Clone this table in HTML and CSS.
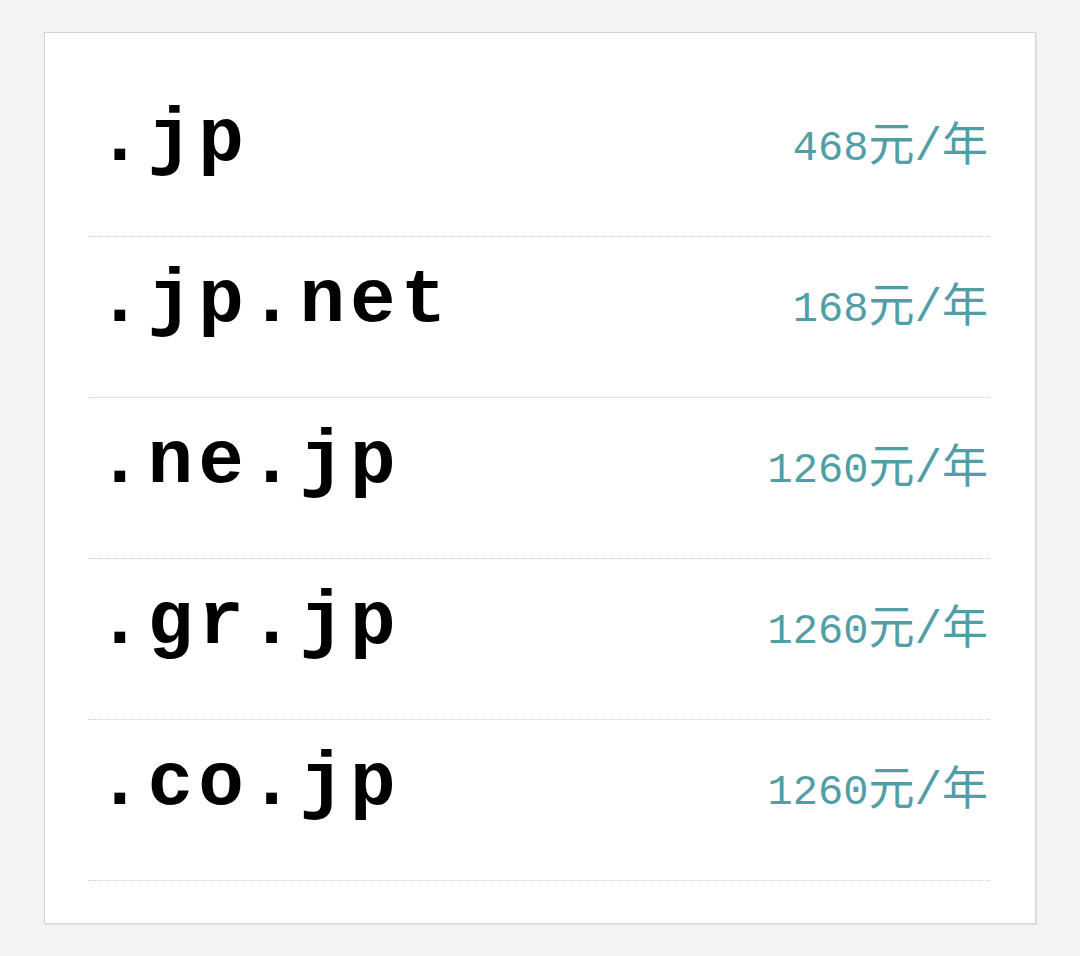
FILE: index.html
```html
<!DOCTYPE html>
<html lang="zh">
<head>
  <meta charset="UTF-8">
  <title>域名价格</title>
  <link rel="stylesheet" href="styles.css">
</head>
<body>

<div class="card">
  <div class="row">
    <span class="domain">.jp</span>
    <span class="price">468<span class="unit">元/年</span></span>
  </div>
  <div class="row">
    <span class="domain">.jp.net</span>
    <span class="price">168<span class="unit">元/年</span></span>
  </div>
  <div class="row">
    <span class="domain">.ne.jp</span>
    <span class="price">1260<span class="unit">元/年</span></span>
  </div>
  <div class="row">
    <span class="domain">.gr.jp</span>
    <span class="price">1260<span class="unit">元/年</span></span>
  </div>
  <div class="row">
    <span class="domain">.co.jp</span>
    <span class="price">1260<span class="unit">元/年</span></span>
  </div>
</div>

</body>
</html>
```

FILE: styles.css
```css
body {
  margin: 0;
  padding: 32px 44px 30px;
  background-color: #f3f3f3;
  font-family: 'Liberation Mono', monospace;
}

.card {
  background: #ffffff;
  border: 1px solid #d2d2d2;
  box-shadow: 1px 1px 0 #e4e4e4;
  height: 892px;
  padding: 43px 45px 0 43px;
  box-sizing: border-box;
}

.row {
  display: flex;
  justify-content: space-between;
  align-items: baseline;
  height: 161px;
  padding-top: 26px;
  padding-right: 2px;
  box-sizing: border-box;
  border-bottom: 1px dotted #cfcfcf;
}

.domain {
  padding-left: 9px;
  font-size: 76px;
  line-height: 1;
  font-weight: bold;
  letter-spacing: 5px;
  color: #000;
}

.price {
  font-family: 'Liberation Mono', 'Noto Sans CJK SC', monospace;
  font-size: 42px;
  line-height: 1;
  color: #529ea6;
}

.unit {
  font-size: 46px;
}
```
